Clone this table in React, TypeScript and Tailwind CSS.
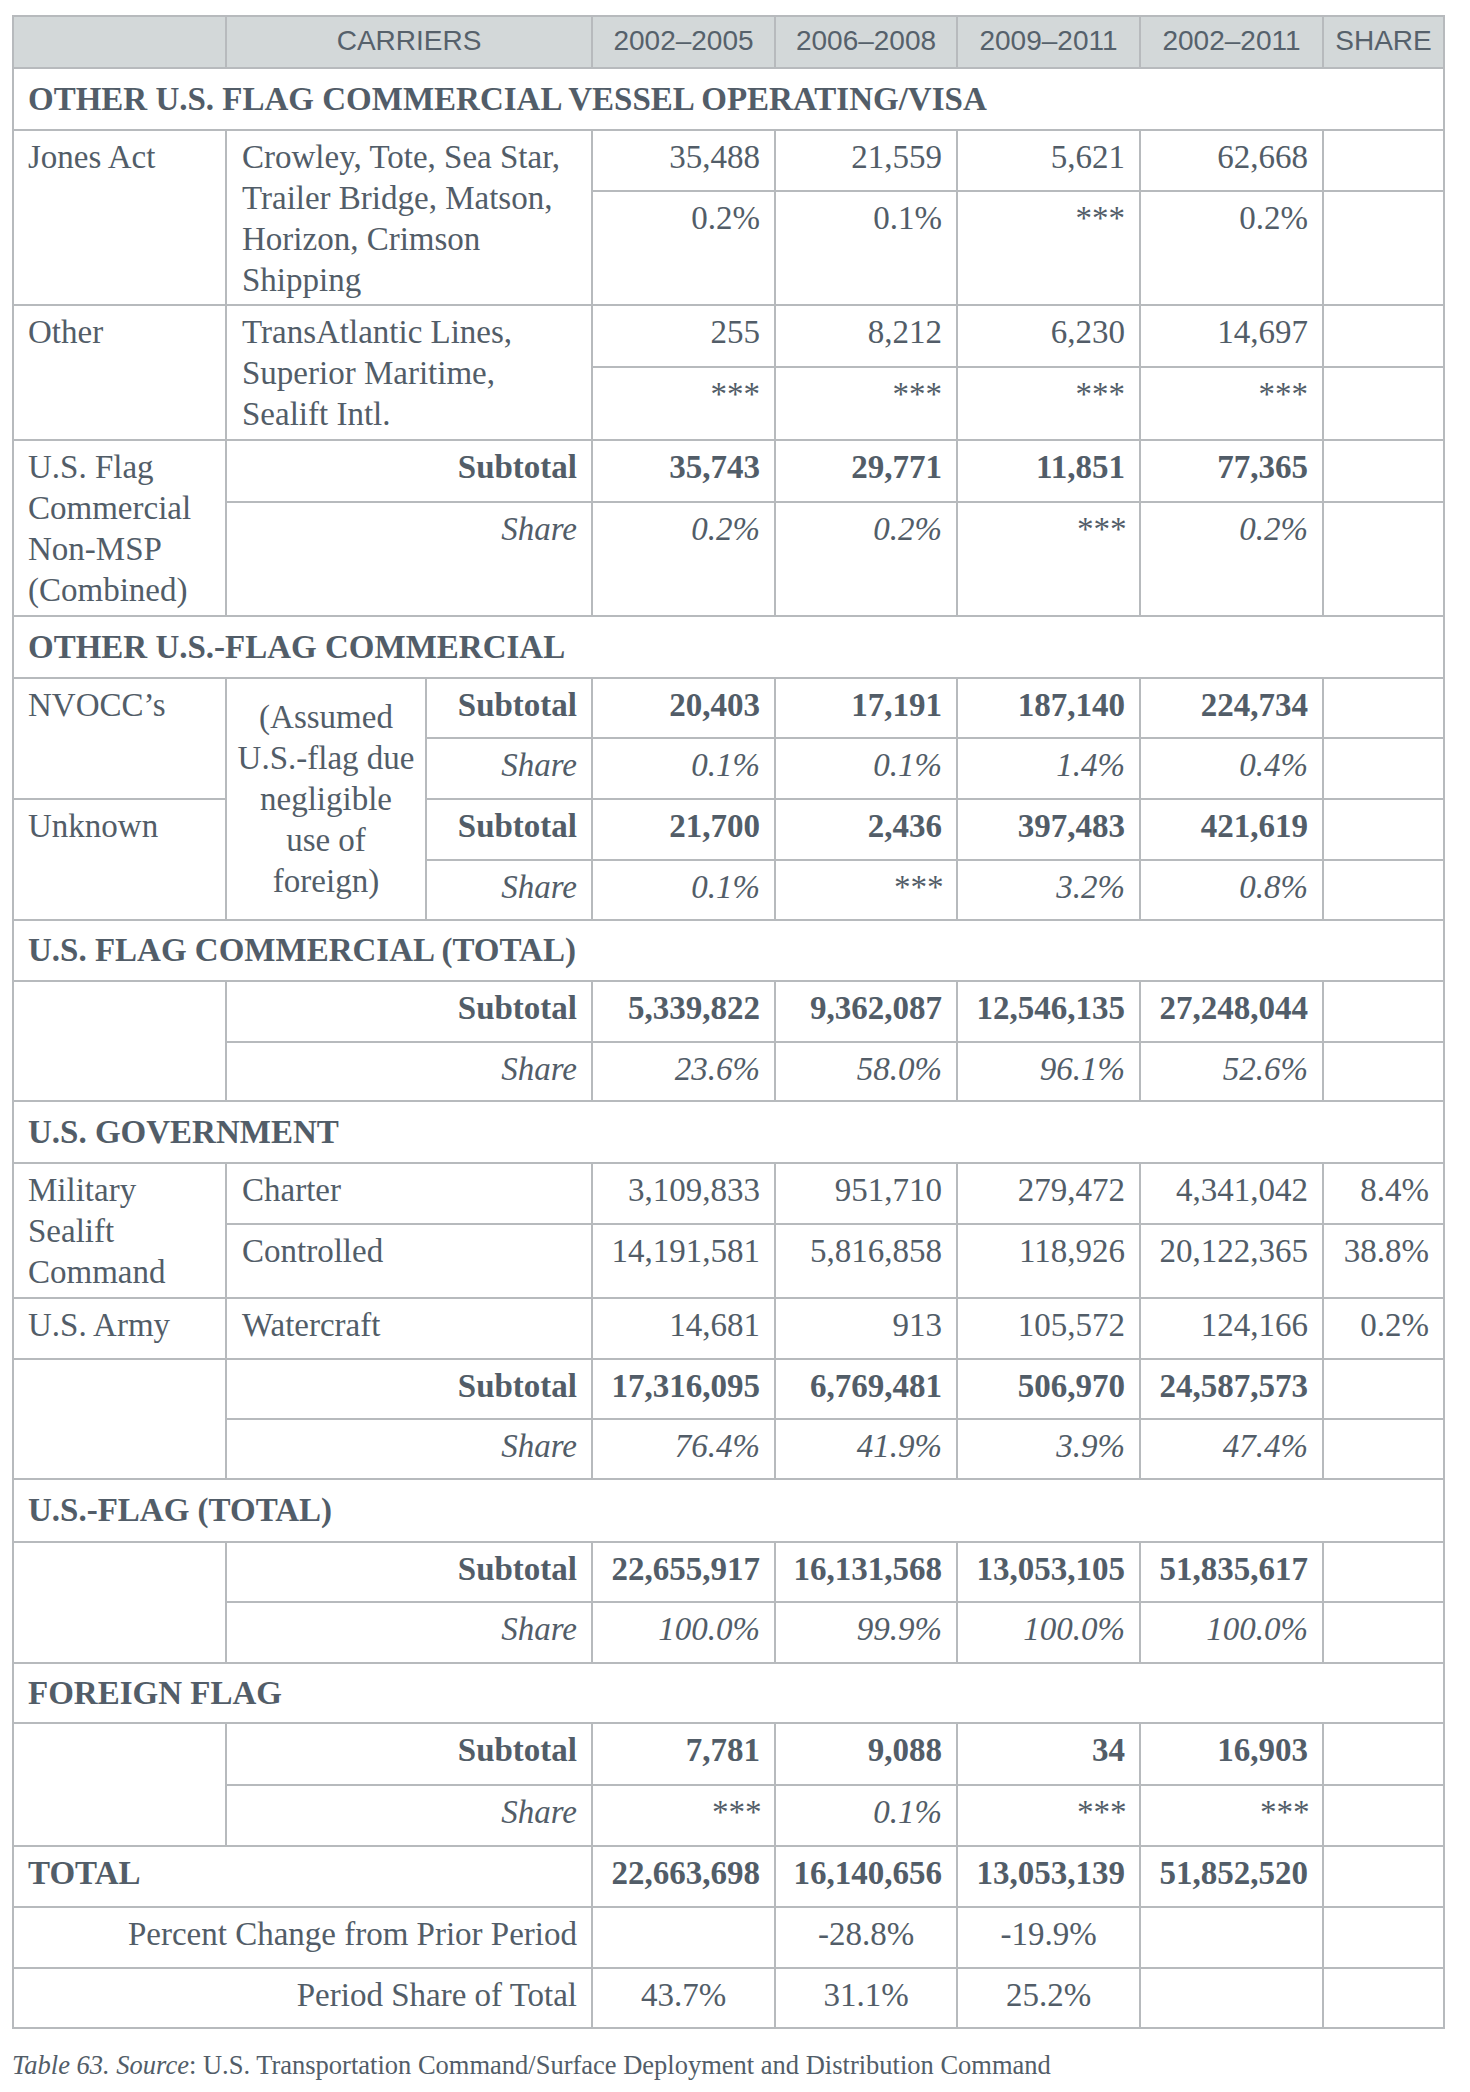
import React from "react";

const B = "border-2 border-[#b7babd]";

type NProps = { v?: string; b?: boolean; i?: boolean; c?: boolean };

function N({ v, b, i, c }: NProps) {
  return (
    <td
      className={`${B} align-top pt-[6px] px-[14px] whitespace-nowrap ${c ? "text-center" : "text-right"} ${b ? "font-bold" : ""} ${i ? "italic" : ""}`}
    >
      {v}
    </td>
  );
}

function Section({ title, h }: { title: string; h: string }) {
  return (
    <tr className={h}>
      <td colSpan={8} className={`${B} align-middle pl-[14px] font-bold whitespace-nowrap`}>
        {title}
      </td>
    </tr>
  );
}

// Subtotal / Share pair with an empty first column
function TotalPair({ sub, share, h1, h2 }: { sub: string[]; share: string[]; h1: string; h2: string }) {
  return (
    <>
      <tr className={h1}>
        <td rowSpan={2} className={B}></td>
        <td colSpan={2} className={`${B} align-top pt-[6px] pr-[14px] text-right font-bold`}>Subtotal</td>
        {sub.map((v, k) => (
          <N key={k} v={v} b />
        ))}
        <N />
      </tr>
      <tr className={h2}>
        <td colSpan={2} className={`${B} align-top pt-[6px] pr-[14px] text-right italic`}>Share</td>
        {share.map((v, k) => (
          <N key={k} v={v} i />
        ))}
        <N />
      </tr>
    </>
  );
}

export default function App() {
  const years = ["2002–2005", "2006–2008", "2009–2011", "2002–2011"];

  return (
    <div className="min-h-screen bg-white pt-[15px] pl-[12px]">
      <table className="table-fixed border-collapse w-[1431px] text-[33px] leading-[41px] font-['Liberation_Serif','Times_New_Roman',serif] text-[#525d68]">
        <colgroup>
          <col className="w-[213px]" />
          <col className="w-[200px]" />
          <col className="w-[166px]" />
          <col className="w-[183px]" />
          <col className="w-[182px]" />
          <col className="w-[183px]" />
          <col className="w-[183px]" />
          <col className="w-[121px]" />
        </colgroup>
        <thead>
          <tr className="h-[52px] bg-[#d3d8d9] font-['Liberation_Sans',Arial,sans-serif] text-[28px] font-normal text-[#56616b]">
            <th className={`${B} font-normal`}></th>
            <th colSpan={2} className={`${B} font-normal align-middle text-center pb-[3px]`}>CARRIERS</th>
            {years.map((y) => (
              <th key={y} className={`${B} font-normal align-middle text-center pb-[3px]`}>{y}</th>
            ))}
            <th className={`${B} font-normal align-middle text-center pb-[3px]`}>SHARE</th>
          </tr>
        </thead>
        <tbody>
          <Section title="OTHER U.S. FLAG COMMERCIAL VESSEL OPERATING/VISA" h="h-[62px]" />

          <tr className="h-[61px]">
            <td rowSpan={2} className={`${B} align-top pt-[6px] pl-[14px]`}>Jones Act</td>
            <td rowSpan={2} colSpan={2} className={`${B} align-top pt-[6px] pl-[15px] pr-2`}>
              Crowley, Tote, Sea Star,
              <br />
              Trailer Bridge, Matson,
              <br />
              Horizon, Crimson
              <br />
              Shipping
            </td>
            <N v="35,488" />
            <N v="21,559" />
            <N v="5,621" />
            <N v="62,668" />
            <N />
          </tr>
          <tr className="h-[114px]">
            <N v="0.2%" />
            <N v="0.1%" />
            <N v="***" />
            <N v="0.2%" />
            <N />
          </tr>

          <tr className="h-[62px]">
            <td rowSpan={2} className={`${B} align-top pt-[6px] pl-[14px]`}>Other</td>
            <td rowSpan={2} colSpan={2} className={`${B} align-top pt-[6px] pl-[15px] pr-2`}>
              TransAtlantic Lines,
              <br />
              Superior Maritime,
              <br />
              Sealift Intl.
            </td>
            <N v="255" />
            <N v="8,212" />
            <N v="6,230" />
            <N v="14,697" />
            <N />
          </tr>
          <tr className="h-[73px]">
            <N v="***" />
            <N v="***" />
            <N v="***" />
            <N v="***" />
            <N />
          </tr>

          <tr className="h-[62px]">
            <td rowSpan={2} className={`${B} align-top pt-[6px] pl-[14px]`}>
              U.S. Flag
              <br />
              Commercial
              <br />
              Non-MSP
              <br />
              (Combined)
            </td>
            <td colSpan={2} className={`${B} align-top pt-[6px] pr-[14px] text-right font-bold`}>Subtotal</td>
            <N v="35,743" b />
            <N v="29,771" b />
            <N v="11,851" b />
            <N v="77,365" b />
            <N />
          </tr>
          <tr className="h-[114px]">
            <td colSpan={2} className={`${B} align-top pt-[6px] pr-[14px] text-right italic`}>Share</td>
            <N v="0.2%" i />
            <N v="0.2%" i />
            <N v="***" i />
            <N v="0.2%" i />
            <N />
          </tr>

          <Section title="OTHER U.S.-FLAG COMMERCIAL" h="h-[62px]" />

          <tr className="h-[60px]">
            <td rowSpan={2} className={`${B} align-top pt-[6px] pl-[14px]`}>NVOCC’s</td>
            <td rowSpan={4} className={`${B} align-middle text-center px-1`}>
              (Assumed
              <br />
              U.S.-flag due
              <br />
              negligible
              <br />
              use of
              <br />
              foreign)
            </td>
            <td className={`${B} align-top pt-[6px] pr-[14px] text-right font-bold`}>Subtotal</td>
            <N v="20,403" b />
            <N v="17,191" b />
            <N v="187,140" b />
            <N v="224,734" b />
            <N />
          </tr>
          <tr className="h-[61px]">
            <td className={`${B} align-top pt-[6px] pr-[14px] text-right italic`}>Share</td>
            <N v="0.1%" i />
            <N v="0.1%" i />
            <N v="1.4%" i />
            <N v="0.4%" i />
            <N />
          </tr>
          <tr className="h-[61px]">
            <td rowSpan={2} className={`${B} align-top pt-[6px] pl-[14px]`}>Unknown</td>
            <td className={`${B} align-top pt-[6px] pr-[14px] text-right font-bold`}>Subtotal</td>
            <N v="21,700" b />
            <N v="2,436" b />
            <N v="397,483" b />
            <N v="421,619" b />
            <N />
          </tr>
          <tr className="h-[60px]">
            <td className={`${B} align-top pt-[6px] pr-[14px] text-right italic`}>Share</td>
            <N v="0.1%" i />
            <N v="***" i />
            <N v="3.2%" i />
            <N v="0.8%" i />
            <N />
          </tr>

          <Section title="U.S. FLAG COMMERCIAL (TOTAL)" h="h-[61px]" />
          <TotalPair
            sub={["5,339,822", "9,362,087", "12,546,135", "27,248,044"]}
            share={["23.6%", "58.0%", "96.1%", "52.6%"]}
            h1="h-[61px]"
            h2="h-[59px]"
          />

          <Section title="U.S. GOVERNMENT" h="h-[62px]" />
          <tr className="h-[61px]">
            <td rowSpan={2} className={`${B} align-top pt-[6px] pl-[14px]`}>
              Military
              <br />
              Sealift
              <br />
              Command
            </td>
            <td colSpan={2} className={`${B} align-top pt-[6px] pl-[15px]`}>Charter</td>
            <N v="3,109,833" />
            <N v="951,710" />
            <N v="279,472" />
            <N v="4,341,042" />
            <N v="8.4%" />
          </tr>
          <tr className="h-[74px]">
            <td colSpan={2} className={`${B} align-top pt-[6px] pl-[15px]`}>Controlled</td>
            <N v="14,191,581" />
            <N v="5,816,858" />
            <N v="118,926" />
            <N v="20,122,365" />
            <N v="38.8%" />
          </tr>
          <tr className="h-[61px]">
            <td className={`${B} align-top pt-[6px] pl-[14px]`}>U.S. Army</td>
            <td colSpan={2} className={`${B} align-top pt-[6px] pl-[15px]`}>Watercraft</td>
            <N v="14,681" />
            <N v="913" />
            <N v="105,572" />
            <N v="124,166" />
            <N v="0.2%" />
          </tr>
          <TotalPair
            sub={["17,316,095", "6,769,481", "506,970", "24,587,573"]}
            share={["76.4%", "41.9%", "3.9%", "47.4%"]}
            h1="h-[60px]"
            h2="h-[60px]"
          />

          <Section title="U.S.-FLAG (TOTAL)" h="h-[63px]" />
          <TotalPair
            sub={["22,655,917", "16,131,568", "13,053,105", "51,835,617"]}
            share={["100.0%", "99.9%", "100.0%", "100.0%"]}
            h1="h-[60px]"
            h2="h-[61px]"
          />

          <Section title="FOREIGN FLAG" h="h-[60px]" />
          <TotalPair
            sub={["7,781", "9,088", "34", "16,903"]}
            share={["***", "0.1%", "***", "***"]}
            h1="h-[62px]"
            h2="h-[61px]"
          />

          <tr className="h-[61px]">
            <td colSpan={3} className={`${B} align-top pt-[6px] pl-[14px] font-bold`}>TOTAL</td>
            <N v="22,663,698" b />
            <N v="16,140,656" b />
            <N v="13,053,139" b />
            <N v="51,852,520" b />
            <N />
          </tr>
          <tr className="h-[61px]">
            <td colSpan={3} className={`${B} align-top pt-[6px] pr-[14px] text-right`}>Percent Change from Prior Period</td>
            <N c />
            <N v="-28.8%" c />
            <N v="-19.9%" c />
            <N />
            <N />
          </tr>
          <tr className="h-[60px]">
            <td colSpan={3} className={`${B} align-top pt-[6px] pr-[14px] text-right`}>Period Share of Total</td>
            <N v="43.7%" c />
            <N v="31.1%" c />
            <N v="25.2%" c />
            <N />
            <N />
          </tr>
        </tbody>
      </table>

      <p className="mt-[20px] text-[26.5px] leading-[32px] font-['Liberation_Serif','Times_New_Roman',serif] text-[#525d68]">
        <span className="italic">Table 63. Source</span>: U.S. Transportation Command/Surface Deployment and Distribution Command
      </p>
    </div>
  );
}
